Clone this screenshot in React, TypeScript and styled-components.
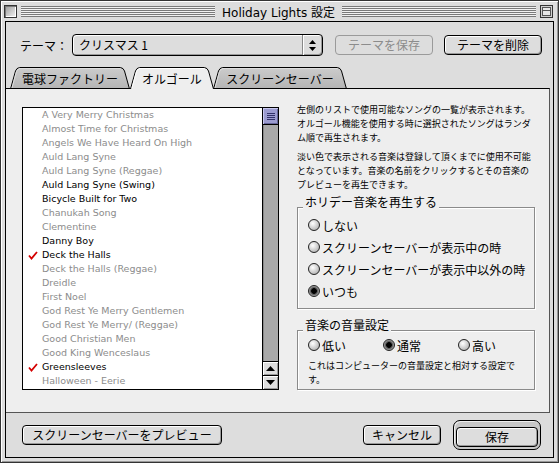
import styled, { createGlobalStyle } from 'styled-components';

const jp = `"Noto Sans CJK JP", "DejaVu Sans", sans-serif`;
const geneva = `"DejaVu Sans", "Noto Sans CJK JP", sans-serif`;

const GlobalStyle = createGlobalStyle`
  html, body {
    margin: 0;
    padding: 0;
    background: #dddddd;
  }
  * {
    box-sizing: border-box;
  }
`;

const songs = [
  { name: 'A Very Merry Christmas', on: false },
  { name: 'Almost Time for Christmas', on: false },
  { name: 'Angels We Have Heard On High', on: false },
  { name: 'Auld Lang Syne', on: false },
  { name: 'Auld Lang Syne (Reggae)', on: false },
  { name: 'Auld Lang Syne (Swing)', on: true },
  { name: 'Bicycle Built for Two', on: true },
  { name: 'Chanukah Song', on: false },
  { name: 'Clementine', on: false },
  { name: 'Danny Boy', on: true },
  { name: 'Deck the Halls', on: true, checked: true },
  { name: 'Deck the Halls (Reggae)', on: false },
  { name: 'Dreidle', on: false },
  { name: 'First Noel', on: false },
  { name: 'God Rest Ye Merry Gentlemen', on: false },
  { name: 'God Rest Ye Merry/ (Reggae)', on: false },
  { name: 'Good Christian Men', on: false },
  { name: 'Good King Wenceslaus', on: false },
  { name: 'Greensleeves', on: true, checked: true },
  { name: 'Halloween - Eerie', on: false },
];

const playModes = ['しない', 'スクリーンセーバーが表示中の時', 'スクリーンセーバーが表示中以外の時', 'いつも'];
const volumes = ['低い', '通常', '高い'];

function TabShape({ w, selected }: { w: number; selected?: boolean }) {
  const d = `M0.5 22 L5.5 4 Q6.5 1 9.5 0.5 L${w - 9.5} 0.5 Q${w - 6.5} 1 ${w - 5.5} 4 L${w - 0.5} 22`;
  return (
    <TabSvg width={w} height={22} viewBox={`0 0 ${w} 22`}>
      <defs>
        <linearGradient id="tabOff" x1="0" y1="0" x2="0" y2="1">
          <stop offset="0" stopColor="#cccccc" />
          <stop offset="1" stopColor="#b4b4b4" />
        </linearGradient>
      </defs>
      <path d={d + ' Z'} fill={selected ? '#eeeeee' : 'url(#tabOff)'} stroke="none" />
      <path d={d} fill="none" stroke="#000" strokeWidth="1" />
      <path
        d={`M2 21 L6.5 4.5 Q7.5 2 10 1.5 L${w - 10} 1.5`}
        fill="none"
        stroke={selected ? '#ffffff' : '#dddddd'}
        strokeWidth="1"
      />
    </TabSvg>
  );
}

function Check() {
  return (
    <svg width="10" height="9" viewBox="0 0 10 9">
      <path d="M1 4.5 L3.5 7.5 L9 1" fill="none" stroke="#d40000" strokeWidth="1.8" />
    </svg>
  );
}

export default function App() {
  return (
    <>
      <GlobalStyle />
      <Window>
        <TitleBar>
          <CloseBox />
          <Stripes />
          <Title>Holiday Lights 設定</Title>
          <Stripes />
          <svg width="13" height="13" viewBox="0 0 13 13">
            <rect x="0.5" y="0.5" width="12" height="12" fill="#cfcfcf" stroke="#333" />
            <rect x="2.5" y="2.5" width="8" height="8" fill="#e8e8e8" stroke="#555" />
            <line x1="2.5" y1="5.5" x2="10.5" y2="5.5" stroke="#555" />
          </svg>
        </TitleBar>

        <Content>
          <ThemeRow>
            <Label>テーマ：</Label>
            <Popup>
              <PopupText>クリスマス 1</PopupText>
              <PopupArrows>
                <svg width="7" height="11" viewBox="0 0 7 11">
                  <path d="M3.5 0 L7 4 L0 4 Z" fill="#000" />
                  <path d="M3.5 11 L7 7 L0 7 Z" fill="#000" />
                </svg>
              </PopupArrows>
            </Popup>
            <Button $w={98} $disabled style={{ marginLeft: 12 }}>
              テーマを保存
            </Button>
            <Button $w={98} style={{ marginLeft: 11 }}>
              テーマを削除
            </Button>
          </ThemeRow>

          <Tabs>
            <Tab $w={120}>
              <TabShape w={120} />
              <TabLabel>電球ファクトリー</TabLabel>
            </Tab>
            <Tab $w={84} $selected>
              <TabShape w={84} selected />
              <TabLabel>オルゴール</TabLabel>
            </Tab>
            <Tab $w={134} style={{ marginLeft: -1 }}>
              <TabShape w={134} />
              <TabLabel>スクリーンセーバー</TabLabel>
            </Tab>
          </Tabs>

          <Pane>
            <ListBox>
              <Items>
                {songs.map((s) => (
                  <Item key={s.name} $on={s.on}>
                    <CheckSlot>{s.checked && <Check />}</CheckSlot>
                    {s.name}
                  </Item>
                ))}
              </Items>
              <ScrollBar>
                <Thumb>
                  <svg width="8" height="8" viewBox="0 0 8 8">
                    <path d="M0 1.5 H8 M0 3.5 H8 M0 5.5 H8 M0 7.5 H8" stroke="#33336a" strokeWidth="1" />
                  </svg>
                </Thumb>
                <Track />
                <ArrowBox>
                  <svg width="9" height="5" viewBox="0 0 9 5">
                    <path d="M4.5 0 L9 5 L0 5 Z" fill="#000" />
                  </svg>
                </ArrowBox>
                <ArrowBox>
                  <svg width="9" height="5" viewBox="0 0 9 5">
                    <path d="M4.5 5 L9 0 L0 0 Z" fill="#000" />
                  </svg>
                </ArrowBox>
              </ScrollBar>
            </ListBox>

            <Side>
              <Para>
                左側のリストで使用可能なソングの一覧が表示されます。
                <br />
                オルゴール機能を使用する時に選択されたソングはランダ
                <br />
                ム順で再生されます。
              </Para>
              <Para style={{ marginTop: 5 }}>
                淡い色で表示される音楽は登録して頂くまでに使用不可能
                <br />
                となっています。音楽の名前をクリックするとその音楽の
                <br />
                プレビューを再生できます。
              </Para>

              <Group $mt={15} $h={102}>
                <GroupTitle>ホリデー音楽を再生する</GroupTitle>
                {playModes.map((m, i) => (
                  <Radio key={m}>
                    <RadioDot $on={i === 3} />
                    {m}
                  </Radio>
                ))}
              </Group>

              <Group $mt={21} $h={60} $tight>
                <GroupTitle>音楽の音量設定</GroupTitle>
                <RadioRow>
                  {volumes.map((v, i) => (
                    <Radio key={v} $w={75}>
                      <RadioDot $on={i === 1} />
                      {v}
                    </Radio>
                  ))}
                </RadioRow>
                <Note>
                  これはコンピューターの音量設定と相対する設定で
                  <br />
                  す。
                </Note>
              </Group>
            </Side>
          </Pane>

          <Footer>
            <Button $w={200}>スクリーンセーバーをプレビュー</Button>
            <Button $w={78} style={{ marginLeft: 'auto' }}>
              キャンセル
            </Button>
            <DefaultRing>
              <Button $w={82}>保存</Button>
            </DefaultRing>
          </Footer>
        </Content>
      </Window>
    </>
  );
}

const Window = styled.div`
  width: 559px;
  height: 463px;
  display: flex;
  flex-direction: column;
  padding: 0 4px 4px;
  background: #dddddd;
  border: 1px solid #333;
  box-shadow: inset 1px 1px 0 #ffffff, inset -1px -1px 0 #999999;
  font-family: ${jp};
  color: #000;
`;

const TitleBar = styled.div`
  height: 20px;
  margin: 0 -4px;
  padding: 0 5px 0 3px;
  display: flex;
  align-items: center;
  gap: 4px;
`;

const CloseBox = styled.div`
  width: 13px;
  height: 13px;
  border: 1px solid #333;
  background: linear-gradient(135deg, #9a9a9a, #f4f4f4);
  box-shadow: inset 1px 1px 0 #777, inset -1px -1px 0 #fff;
`;

const Stripes = styled.div`
  flex: 1;
  height: 11px;
  background: repeating-linear-gradient(to bottom, #7a7a7a 0 1px, #f2f2f2 1px 2px);
`;

const Title = styled.div`
  padding: 0 3px;
  font: 12px ${geneva};
  white-space: nowrap;
`;

const Content = styled.div`
  flex: 1;
  display: flex;
  flex-direction: column;
  border: 1px solid #000;
  background: #dddddd;
`;

const ThemeRow = styled.div`
  margin-top: 12px;
  height: 22px;
  padding: 0 11px 0 14px;
  display: flex;
  align-items: center;
`;

const Label = styled.span`
  width: 52px;
  font-size: 12px;
  white-space: nowrap;
`;

const Popup = styled.div`
  width: 251px;
  height: 22px;
  display: flex;
  border: 1px solid #000;
  border-radius: 4px;
  background: #dddddd;
  box-shadow: inset 1px 1px 0 #fff, inset -1px -1px 0 #999;
`;

const PopupText = styled.span`
  flex: 1;
  padding-left: 6px;
  font-size: 12px;
  line-height: 20px;
`;

const PopupArrows = styled.span`
  width: 20px;
  display: flex;
  align-items: center;
  justify-content: center;
  border-left: 1px solid #888;
  box-shadow: inset 1px 0 0 #fff;
`;

const Button = styled.button<{ $w: number; $disabled?: boolean }>`
  width: ${(p) => p.$w}px;
  height: 20px;
  padding: 0;
  flex-shrink: 0;
  border: 1px solid ${(p) => (p.$disabled ? '#9a9a9a' : '#000')};
  border-radius: 4px;
  background: #dddddd;
  box-shadow: ${(p) => (p.$disabled ? 'none' : 'inset 1px 1px 0 #fff, inset -1px -1px 0 #999')};
  font: 12px ${jp};
  line-height: 18px;
  color: ${(p) => (p.$disabled ? '#8c8c8c' : '#000')};
  white-space: nowrap;
`;

const DefaultRing = styled.div`
  margin-left: 12px;
  padding: 2px;
  border: 1px solid #000;
  border-radius: 7px;
  background: #c8c8c8;
  box-shadow: inset 1px 1px 0 #eee;
`;

const Tabs = styled.div`
  margin-top: 11px;
  margin-bottom: -1px;
  height: 22px;
  padding-left: 4px;
  display: flex;
`;

const Tab = styled.div<{ $w: number; $selected?: boolean }>`
  position: relative;
  z-index: ${(p) => (p.$selected ? 3 : 0)};
  width: ${(p) => p.$w}px;
  height: 22px;
  display: flex;
  justify-content: center;
`;

const TabSvg = styled.svg`
  position: absolute;
  inset: 0;
`;

const TabLabel = styled.span`
  position: relative;
  font-size: 12px;
  line-height: 22px;
  padding-top: 1px;
  white-space: nowrap;
`;

const Pane = styled.div`
  position: relative;
  z-index: 1;
  height: 325px;
  margin-right: 3px;
  padding: 14px 0 0 16px;
  display: flex;
  align-items: flex-start;
  gap: 18px;
  background: #eeeeee;
  border-top: 1px solid #000;
  border-right: 1px solid #555;
  border-bottom: 1px solid #555;
`;

const ListBox = styled.div`
  margin-top: 4px;
  width: 257px;
  height: 283px;
  display: flex;
  border: 1px solid #000;
  background: #ffffff;
`;

const Items = styled.div`
  flex: 1;
  overflow: hidden;
`;

const Item = styled.div<{ $on: boolean }>`
  height: 14px;
  display: flex;
  align-items: center;
  font: 9.5px ${geneva};
  line-height: 14px;
  color: ${(p) => (p.$on ? '#000' : '#8c8c8c')};
  white-space: nowrap;
`;

const CheckSlot = styled.span`
  width: 19px;
  height: 14px;
  padding-left: 5px;
  display: flex;
  align-items: center;
`;

const ScrollBar = styled.div`
  width: 16px;
  display: flex;
  flex-direction: column;
  border-left: 1px solid #000;
`;

const Thumb = styled.div`
  height: 17px;
  display: flex;
  align-items: center;
  justify-content: center;
  background: #9c9cd0;
  border-bottom: 1px solid #000;
  box-shadow: inset 1px 1px 0 #c8c8f0, inset -1px -1px 0 #66669a;
`;

const Track = styled.div`
  flex: 1;
  background: #a9a9a9;
  box-shadow: inset 1px 0 0 #888;
`;

const ArrowBox = styled.div`
  height: 14px;
  display: flex;
  align-items: center;
  justify-content: center;
  border-top: 1px solid #000;
  background: #dddddd;
  box-shadow: inset 1px 1px 0 #fff, inset -1px -1px 0 #999;
`;

const Side = styled.div`
  width: 238px;
  display: flex;
  flex-direction: column;
`;

const Para = styled.p`
  margin: 0;
  font-size: 9px;
  line-height: 14px;
  white-space: nowrap;
`;

const Group = styled.div<{ $mt: number; $h: number; $tight?: boolean }>`
  position: relative;
  margin-top: ${(p) => p.$mt}px;
  height: ${(p) => p.$h}px;
  padding: ${(p) => (p.$tight ? '3px 0 0 10px' : '6px 0 0 10px')};
  border: 1px solid #8a8a8a;
  box-shadow: 1px 1px 0 #fff, inset 1px 1px 0 #fff;
`;

const GroupTitle = styled.span`
  position: absolute;
  top: -14px;
  left: 5px;
  padding: 0 2px;
  background: #eeeeee;
  font-size: 12px;
  line-height: 16px;
  white-space: nowrap;
`;

const RadioRow = styled.div`
  display: flex;
`;

const Radio = styled.div<{ $w?: number }>`
  height: 22px;
  width: ${(p) => (p.$w ? `${p.$w}px` : 'auto')};
  display: flex;
  align-items: center;
  gap: 2px;
  font-size: 12px;
  white-space: nowrap;
`;

const RadioDot = styled.span<{ $on?: boolean }>`
  width: 12px;
  height: 12px;
  flex-shrink: 0;
  border-radius: 50%;
  border: 1px solid #222;
  background: ${(p) =>
    p.$on
      ? 'radial-gradient(circle, #000 0 2.5px, #444 3px, #777 4px, #aaa 5px)'
      : 'radial-gradient(circle at 38% 35%, #ffffff 0, #e4e4e4 30%, #a0a0a0 100%)'};
`;

const Note = styled.p`
  margin: 3px 0 0;
  font-size: 9px;
  line-height: 14px;
  white-space: nowrap;
`;

const Footer = styled.div`
  flex: 1;
  display: flex;
  align-items: center;
  padding: 0 12px 0 16px;
`;
